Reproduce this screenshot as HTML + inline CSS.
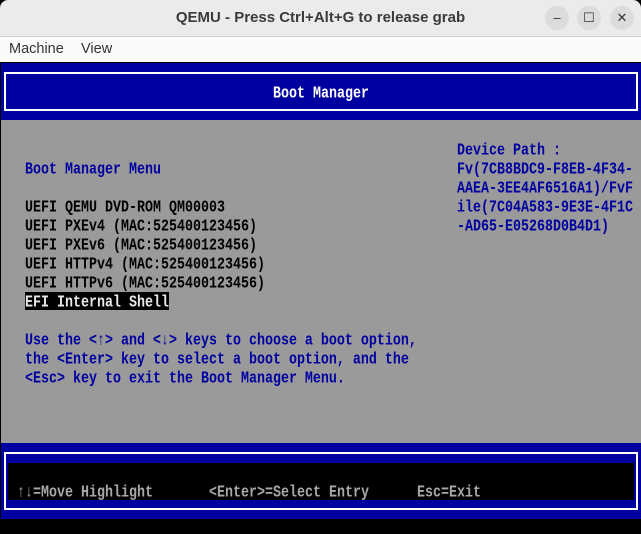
<!DOCTYPE html>
<html><head><meta charset="utf-8"><style>
*{margin:0;padding:0;box-sizing:border-box}
body{width:641px;height:534px;overflow:hidden;background:#000;position:relative;font-family:"Liberation Sans",sans-serif}
.title{position:absolute;left:0;top:0;width:641px;height:36px;background:#ebebeb;border-radius:8px 8px 0 0}
.title .t{position:absolute;left:0;right:0;top:9px;text-align:center;font-weight:bold;font-size:15px;color:#3a3a3a}
.btn{position:absolute;top:6px;width:24px;height:24px;border-radius:12px;background:#dcdcdc;color:#333;font-size:13px;text-align:center;line-height:24px}
.menu{position:absolute;left:0;top:36px;width:641px;height:26px;background:#fafafa;border-top:1px solid #d0d0d0;font-size:14.5px;color:#333}
.menu span{position:absolute;top:4px}
.fb{position:absolute;left:1px;top:63px;width:640px;height:456px;background:#9a9a9a}
.blue{position:absolute;background:#0000a0;left:0;width:640px}
.box{position:absolute;border:2px solid #fff}
.r{position:absolute;font-family:"Liberation Mono",monospace;font-weight:bold;font-size:13.33px;height:19px;line-height:19px;white-space:pre;transform:translateY(3px) scaleY(1.25);transform-origin:left center}
.b{color:#0000a0}.k{color:#000}.w{color:#fff}.g{color:#a8a8a8}
</style></head><body>
<div class="title"><div class="t">QEMU - Press Ctrl+Alt+G to release grab</div>
<div class="btn" style="left:545px">–</div><div class="btn" style="left:577px">☐</div><div class="btn" style="left:610px">✕</div></div>
<div class="menu"><span style="left:9px">Machine</span><span style="left:81px">View</span></div>
<div style="position:absolute;left:0;top:62px;width:641px;height:1px;background:#000"></div>
<div class="fb">
<div class="blue" style="top:0;height:57px"></div>
<div class="box" style="left:3px;top:9px;width:634px;height:39px"></div>
<div class="r w" style="left:0;width:640px;text-align:center;transform-origin:center;top:19px">Boot Manager</div>
<div class="r b" style="left:24px;top:95px">Boot Manager Menu</div>
<div class="r k" style="left:24px;top:133px">UEFI QEMU DVD-ROM QM00003</div>
<div class="r k" style="left:24px;top:152px">UEFI PXEv4 (MAC:525400123456)</div>
<div class="r k" style="left:24px;top:171px">UEFI PXEv6 (MAC:525400123456)</div>
<div class="r k" style="left:24px;top:190px">UEFI HTTPv4 (MAC:525400123456)</div>
<div class="r k" style="left:24px;top:209px">UEFI HTTPv6 (MAC:525400123456)</div>
<div style="position:absolute;left:24px;top:229px;width:144px;height:18px;background:#000"></div>
<div class="r w" style="left:24px;top:228px;color:#e8e8e8">EFI Internal Shell</div>
<div class="r b" style="left:24px;top:266px">Use the &lt;↑&gt; and &lt;↓&gt; keys to choose a boot option,</div>
<div class="r b" style="left:24px;top:285px">the &lt;Enter&gt; key to select a boot option, and the</div>
<div class="r b" style="left:24px;top:304px">&lt;Esc&gt; key to exit the Boot Manager Menu.</div>
<div class="r b" style="left:456px;top:76px">Device Path :</div>
<div class="r b" style="left:456px;top:95px">Fv(7CB8BDC9-F8EB-4F34-</div>
<div class="r b" style="left:456px;top:114px">AAEA-3EE4AF6516A1)/FvF</div>
<div class="r b" style="left:456px;top:133px">ile(7C04A583-9E3E-4F1C</div>
<div class="r b" style="left:456px;top:152px">-AD65-E05268D0B4D1)</div>
<div class="blue" style="top:380px;height:76px"></div>
<div class="box" style="left:3px;top:389px;width:634px;height:58px"></div>
<div style="position:absolute;left:7px;top:400px;width:626px;height:37px;background:#000"></div>
<div class="r g" style="left:16px;top:418px">↑↓=Move Highlight</div>
<div class="r g" style="left:208px;top:418px">&lt;Enter&gt;=Select Entry</div>
<div class="r g" style="left:416px;top:418px">Esc=Exit</div>
</div>
</body></html>
